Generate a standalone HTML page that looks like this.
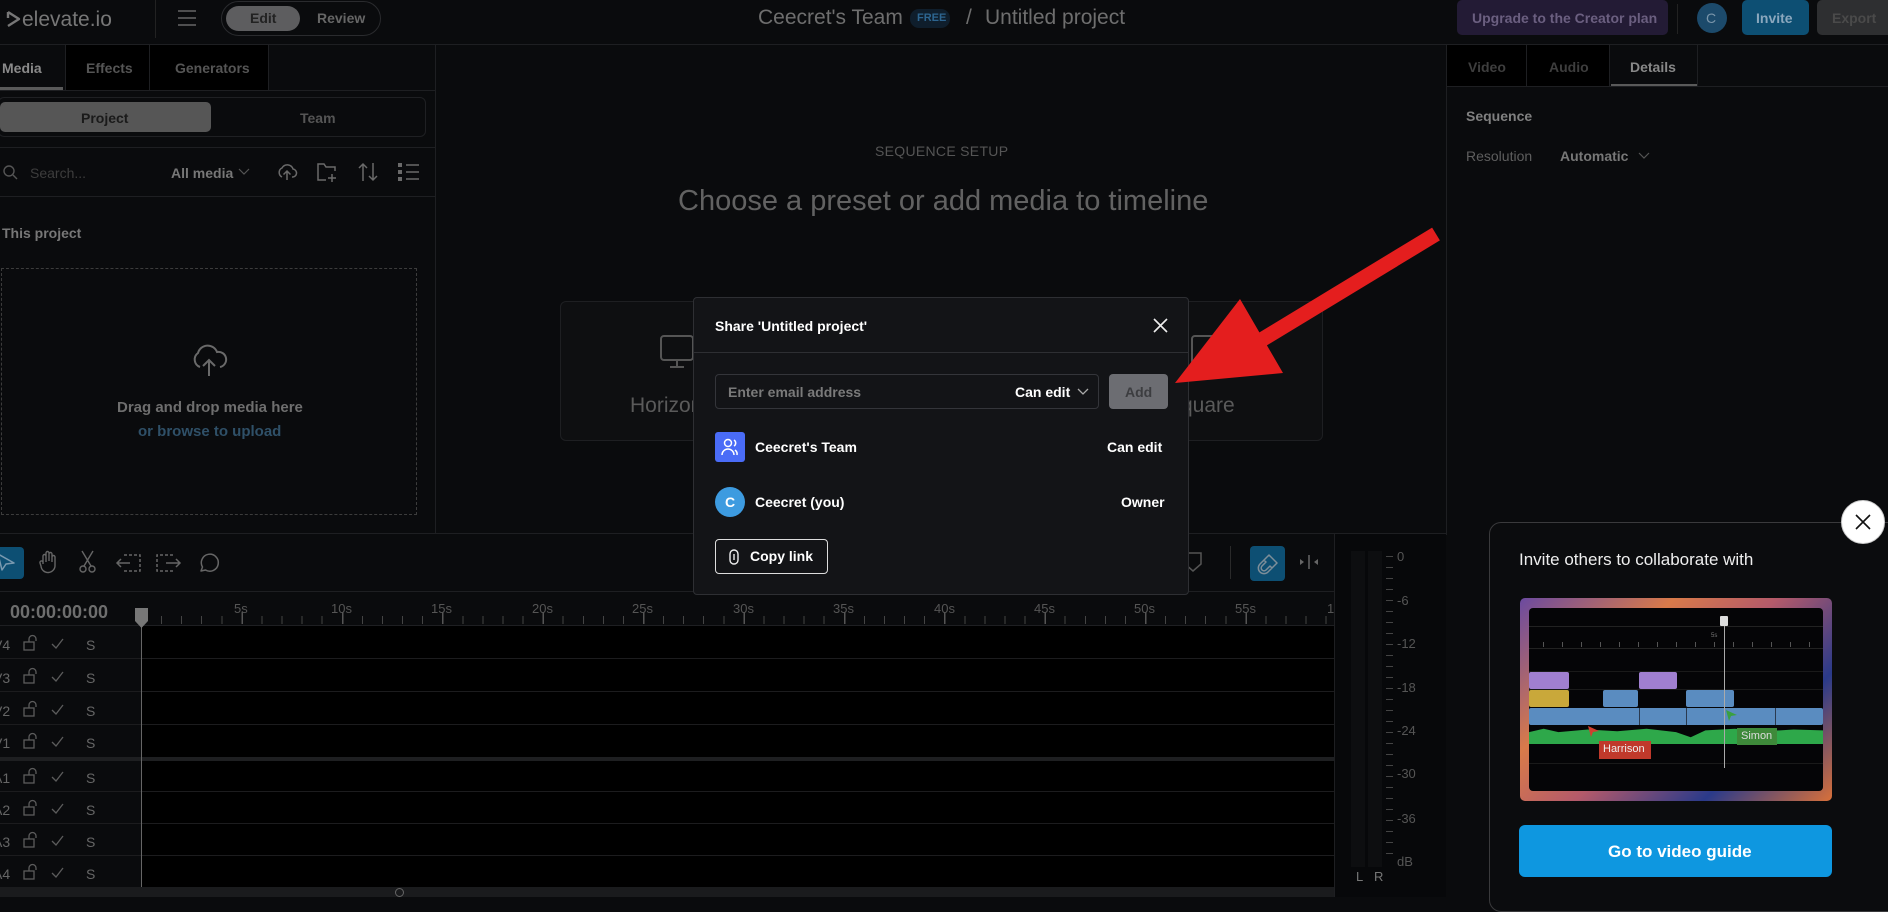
<!DOCTYPE html>
<html><head><meta charset="utf-8"><style>
*{margin:0;padding:0;box-sizing:border-box}
body{width:1888px;height:897px;overflow:hidden;background:#0a0b0d;font-family:"Liberation Sans",sans-serif;position:relative;color:#777}
.a{position:absolute}
.t{position:absolute;white-space:nowrap}
.b{font-weight:bold}
svg{position:absolute;overflow:visible}
</style></head><body>

<!-- HEADER -->
<div class="a" style="left:0;top:0;width:1888px;height:45px;background:#0a0b0d;border-bottom:1px solid #1e1f22"></div>
<svg style="left:6px;top:10px" width="16" height="18" viewBox="0 0 16 18"><path d="M2 2 L13 9 L2 16 M2 2 L2 8" fill="none" stroke="#777" stroke-width="2.4" stroke-linejoin="round"/></svg>
<div class="t" style="left:22px;top:8px;font-size:21px;color:#777">elevate.io</div>
<div class="a" style="left:155px;top:0;width:1px;height:38px;background:#222"></div>
<svg style="left:177px;top:10px" width="20" height="16"><path d="M1 1H19M1 8H19M1 15H19" stroke="#666" stroke-width="1.5"/></svg>
<div class="a" style="left:221px;top:1px;width:160px;height:35px;border:1px solid #2a2b2e;border-radius:18px"></div>
<div class="a" style="left:226px;top:6px;width:74px;height:25px;background:#5d5d5f;border-radius:13px"></div>
<div class="t b" style="left:250px;top:10px;font-size:14px;color:#222">Edit</div>
<div class="t b" style="left:317px;top:10px;font-size:14px;color:#666">Review</div>
<div class="t" style="left:758px;top:6px;font-size:21px;color:#6e6e6e">Ceecret's Team</div>
<div class="a" style="left:910px;top:9px;width:40px;height:19px;background:#0f1e2c;border-radius:9px"></div>
<div class="t b" style="left:917px;top:12px;font-size:11px;color:#2d6590">FREE</div>
<div class="t" style="left:966px;top:6px;font-size:21px;color:#6e6e6e">/</div>
<div class="t" style="left:985px;top:6px;font-size:21px;color:#6e6e6e">Untitled project</div>
<div class="a" style="left:1457px;top:0;width:211px;height:35px;background:#231b35;border-radius:5px"></div>
<div class="t b" style="left:1472px;top:10px;font-size:14px;color:#6b5f80">Upgrade to the Creator plan</div>
<div class="a" style="left:1677px;top:4px;width:1px;height:30px;background:#222"></div>
<div class="a" style="left:1697px;top:3px;width:30px;height:30px;background:#1c4a6b;border-radius:50%"></div>
<div class="t" style="left:1706px;top:10px;font-size:14px;color:#7a95aa">C</div>
<div class="a" style="left:1742px;top:0;width:67px;height:35px;background:#0d4f73;border-radius:5px"></div>
<div class="t b" style="left:1756px;top:10px;font-size:14px;color:#8aa7bd">Invite</div>
<div class="a" style="left:1817px;top:0;width:71px;height:35px;background:#2e2f31;border-radius:5px 0 0 5px"></div>
<div class="t b" style="left:1832px;top:10px;font-size:14px;color:#4a4a4a">Export</div>

<!-- LEFT PANEL -->
<div class="a" style="left:435px;top:45px;width:1px;height:488px;background:#1e1f22"></div>
<div class="a" style="left:65px;top:45px;width:85px;height:45px;background:#000;border-right:1px solid #1e1f22;border-left:1px solid #1e1f22"></div>
<div class="a" style="left:150px;top:45px;width:119px;height:45px;background:#000;border-right:1px solid #1e1f22"></div>
<div class="a" style="left:0;top:90px;width:436px;height:1px;background:#1e1f22"></div>
<div class="a" style="left:0;top:87px;width:63px;height:3px;background:#5a5a5a"></div>
<div class="t b" style="left:2px;top:60px;font-size:14px;color:#8a8a8a">Media</div>
<div class="t b" style="left:86px;top:60px;font-size:14px;color:#555">Effects</div>
<div class="t b" style="left:175px;top:60px;font-size:14px;color:#555">Generators</div>
<div class="a" style="left:-2px;top:97px;width:428px;height:40px;border:1px solid #1f2023;border-radius:6px"></div>
<div class="a" style="left:0;top:102px;width:211px;height:30px;background:#565656;border-radius:5px"></div>
<div class="t b" style="left:81px;top:110px;font-size:14px;color:#1a1a1a">Project</div>
<div class="t b" style="left:300px;top:110px;font-size:14px;color:#555">Team</div>
<div class="a" style="left:0;top:147px;width:436px;height:1px;background:#1e1f22"></div>
<svg style="left:3px;top:165px" width="16" height="16"><circle cx="6" cy="6" r="5" fill="none" stroke="#555" stroke-width="1.4"/><path d="M10 10L14 14" stroke="#555" stroke-width="1.4"/></svg>
<div class="t" style="left:30px;top:165px;font-size:14px;color:#3d3d3d">Search...</div>
<div class="t b" style="left:171px;top:165px;font-size:14px;color:#777">All media</div>
<svg style="left:238px;top:168px" width="12" height="8"><path d="M1 1L6 6L11 1" fill="none" stroke="#555" stroke-width="1.2"/></svg>
<svg style="left:275px;top:160px" width="24" height="24" viewBox="0 0 24 24"><path d="M7 17A5 5 0 0 1 7 8A6 6 0 0 1 18 9A4 4 0 0 1 17 17M12 20V11M8.5 14.5L12 11L15.5 14.5" fill="none" stroke="#6a6a6a" stroke-width="1.5"/></svg>
<svg style="left:316px;top:160px" width="22" height="24" viewBox="0 0 22 24"><path d="M10 20H2V4H8L10 7H19V11M16 14V22M12 18H20" fill="none" stroke="#6a6a6a" stroke-width="1.5"/></svg>
<svg style="left:357px;top:160px" width="22" height="24" viewBox="0 0 22 24"><path d="M6 21V4M2 8L6 4L10 8M16 3V20M12 16L16 20L20 16" fill="none" stroke="#6a6a6a" stroke-width="1.5"/></svg>
<svg style="left:397px;top:162px" width="24" height="20" viewBox="0 0 24 20"><path d="M9 3H22M9 10H22M9 17H22" stroke="#6a6a6a" stroke-width="1.6"/><rect x="1" y="1" width="4" height="4" fill="#6a6a6a"/><rect x="1" y="8" width="4" height="4" fill="#6a6a6a"/><rect x="1" y="15" width="4" height="4" fill="#6a6a6a"/></svg>
<div class="a" style="left:0;top:196px;width:436px;height:1px;background:#1e1f22"></div>
<div class="t b" style="left:2px;top:225px;font-size:14px;color:#777">This project</div>
<div class="a" style="left:1px;top:268px;width:416px;height:247px;border:1px dashed #3c3c3c"></div>
<svg style="left:190px;top:344px" width="38" height="34" viewBox="0 0 38 34"><path d="M10 23A8 8 0 0 1 8 9A10 10 0 0 1 27 8A7 7 0 0 1 30 23M19 32V17M13 22L19 16L25 22" fill="none" stroke="#6a6a6a" stroke-width="2"/></svg>
<div class="t b" style="left:117px;top:399px;font-size:15px;color:#6e6e6e">Drag and drop media here</div>
<div class="t b" style="left:138px;top:423px;font-size:15px;color:#2f5068">or browse to upload</div>

<!-- CENTER -->
<div class="t" style="left:875px;top:143px;font-size:14px;color:#555;letter-spacing:.3px">SEQUENCE SETUP</div>
<div class="t" style="left:678px;top:185px;font-size:29px;color:#626262">Choose a preset or add media to timeline</div>
<div class="a" style="left:560px;top:301px;width:240px;height:140px;background:#0e0f11;border:1px solid #1e1f22;border-radius:6px"></div>
<div class="a" style="left:1083px;top:301px;width:240px;height:140px;background:#0e0f11;border:1px solid #1e1f22;border-radius:6px"></div>
<svg style="left:660px;top:335px" width="34" height="34"><rect x="1" y="1" width="32" height="24" rx="3" fill="none" stroke="#555" stroke-width="2"/><path d="M17 25V32M10 32H24" stroke="#555" stroke-width="2"/></svg>
<div class="t" style="left:630px;top:394px;font-size:21px;color:#5a5a5a">Horizontal</div>
<svg style="left:1191px;top:335px" width="30" height="30"><rect x="1" y="1" width="28" height="28" rx="3" fill="none" stroke="#555" stroke-width="2"/></svg>
<div class="t" style="left:1167px;top:394px;font-size:21px;color:#5a5a5a">Square</div>

<!-- RIGHT PANEL -->
<div class="a" style="left:1446px;top:45px;width:1px;height:490px;background:#1e1f22"></div>
<div class="a" style="left:1447px;top:45px;width:80px;height:41px;background:#000;border-right:1px solid #1e1f22"></div>
<div class="a" style="left:1527px;top:45px;width:83px;height:41px;background:#000;border-right:1px solid #1e1f22"></div>
<div class="a" style="left:1610px;top:45px;width:88px;height:41px;border-right:1px solid #1e1f22"></div>
<div class="a" style="left:1447px;top:86px;width:441px;height:1px;background:#1e1f22"></div>
<div class="a" style="left:1611px;top:84px;width:86px;height:2px;background:#5a5a5a"></div>
<div class="t b" style="left:1468px;top:59px;font-size:14px;color:#3e3e3e">Video</div>
<div class="t b" style="left:1549px;top:59px;font-size:14px;color:#3e3e3e">Audio</div>
<div class="t b" style="left:1630px;top:59px;font-size:14px;color:#888">Details</div>
<div class="t b" style="left:1466px;top:108px;font-size:14px;color:#808080">Sequence</div>
<div class="t" style="left:1466px;top:148px;font-size:14px;color:#5e5e5e">Resolution</div>
<div class="t b" style="left:1560px;top:148px;font-size:14px;color:#777">Automatic</div>
<svg style="left:1638px;top:152px" width="12" height="8"><path d="M1 1L6 6L11 1" fill="none" stroke="#555" stroke-width="1.2"/></svg>

<!-- TIMELINE -->
<div class="a" style="left:0;top:533px;width:1446px;height:1px;background:#1e1f22"></div>
<div class="a" style="left:0;top:591px;width:1334px;height:1px;background:#1e1f22"></div>
<div class="a" style="left:0;top:547px;width:24px;height:32px;background:#0d4f73;border-radius:0 4px 4px 0"></div>
<svg style="left:0;top:553px" width="16" height="18"><path d="M-2 1L14 10L6 11L2 17Z" fill="none" stroke="#7a9ab0" stroke-width="1.5" stroke-linejoin="round"/></svg>
<svg style="left:38px;top:550px" width="22" height="24" viewBox="0 0 22 24"><path d="M5 14V6A1.5 1.5 0 0 1 8 6V12M8 11V3A1.5 1.5 0 0 1 11 3V11M11 11V4A1.5 1.5 0 0 1 14 4V12M14 12V7A1.5 1.5 0 0 1 17 7V15A7 7 0 0 1 3 16L2 13A1.5 1.5 0 0 1 5 12" fill="none" stroke="#666" stroke-width="1.4"/></svg>
<svg style="left:78px;top:550px" width="20" height="24" viewBox="0 0 20 24"><circle cx="5" cy="19" r="3" fill="none" stroke="#666" stroke-width="1.4"/><circle cx="14" cy="19" r="3" fill="none" stroke="#666" stroke-width="1.4"/><path d="M6 16L15 1M13 16L4 1" stroke="#666" stroke-width="1.4"/></svg>
<svg style="left:116px;top:553px" width="26" height="20" viewBox="0 0 26 20"><path d="M8 2H24V18H8" fill="none" stroke="#666" stroke-width="1.5" stroke-dasharray="3 2"/><path d="M1 10H14M5 6L1 10L5 14" fill="none" stroke="#666" stroke-width="1.5"/></svg>
<svg style="left:155px;top:553px" width="26" height="20" viewBox="0 0 26 20"><path d="M18 2H2V18H18" fill="none" stroke="#666" stroke-width="1.5" stroke-dasharray="3 2"/><path d="M11 10H25M21 6L25 10L21 14" fill="none" stroke="#666" stroke-width="1.5"/></svg>
<svg style="left:197px;top:551px" width="24" height="24" viewBox="0 0 24 24"><path d="M4 20L5.5 16A8.5 8.5 0 1 1 8.5 19Z" fill="none" stroke="#666" stroke-width="1.5" stroke-linejoin="round"/></svg>
<svg style="left:1184px;top:552px" width="18" height="20"><path d="M1 1H17V12L9 19L1 12Z" fill="none" stroke="#555" stroke-width="1.5"/></svg>
<div class="a" style="left:1230px;top:546px;width:1px;height:33px;background:#2a2a2a"></div>
<div class="a" style="left:1250px;top:546px;width:35px;height:35px;background:#0d4f73;border-radius:4px"></div>
<svg style="left:1256px;top:552px" width="24" height="24" viewBox="0 0 24 24"><path d="M8 8L4 12A5 5 0 0 0 12 20L16 16M11 5L8 8M16 16L19 13M11 5L13 3L21 11L19 13M8 8L10 10L6 14A2 2 0 0 0 10 18L14 14L16 16" fill="none" stroke="#7d8e99" stroke-width="1.5" stroke-linejoin="round"/></svg>
<svg style="left:1299px;top:554px" width="20" height="16"><path d="M10 1V15" stroke="#666" stroke-width="1.5"/><path d="M1 5L5 8L1 11ZM19 5L15 8L19 11Z" fill="#666"/></svg>

<div class="t b" style="left:10px;top:602px;font-size:18px;color:#6e6e6e">00:00:00:00</div>
<div class="a" style="left:141px;top:616px;width:1193px;height:8px;background:repeating-linear-gradient(90deg,#444 0 1px,transparent 1px 20.08px)"></div>
<div class="a" style="left:141px;top:612px;width:1193px;height:12px;background:repeating-linear-gradient(90deg,#555 0 1.5px,transparent 1.5px 100.4px)"></div>
<div class="a" style="left:0;top:625px;width:1334px;height:1px;background:#1e1f22"></div>
<div class="t" style="left:234px;top:601px;font-size:13px;color:#555">5s</div>
<div class="t" style="left:331px;top:601px;font-size:13px;color:#555">10s</div>
<div class="t" style="left:431px;top:601px;font-size:13px;color:#555">15s</div>
<div class="t" style="left:532px;top:601px;font-size:13px;color:#555">20s</div>
<div class="t" style="left:632px;top:601px;font-size:13px;color:#555">25s</div>
<div class="t" style="left:733px;top:601px;font-size:13px;color:#555">30s</div>
<div class="t" style="left:833px;top:601px;font-size:13px;color:#555">35s</div>
<div class="t" style="left:934px;top:601px;font-size:13px;color:#555">40s</div>
<div class="t" style="left:1034px;top:601px;font-size:13px;color:#555">45s</div>
<div class="t" style="left:1134px;top:601px;font-size:13px;color:#555">50s</div>
<div class="t" style="left:1235px;top:601px;font-size:13px;color:#555">55s</div>
<div class="a" style="left:1327px;top:601px;width:7px;height:16px;overflow:hidden"><div class="t" style="left:0;top:0;font-size:13px;color:#555">1m</div></div>

<!-- tracks -->
<div class="a" style="left:141px;top:626px;width:1193px;height:261px;background:#000"></div>
<div class="a" style="left:0;top:658px;width:1334px;height:1px;background:#1c1c1e"></div>
<div class="a" style="left:0;top:691px;width:1334px;height:1px;background:#1c1c1e"></div>
<div class="a" style="left:0;top:724px;width:1334px;height:1px;background:#1c1c1e"></div>
<div class="a" style="left:0;top:757px;width:1334px;height:4px;background:#1e1f21"></div>
<div class="a" style="left:0;top:791px;width:1334px;height:1px;background:#1c1c1e"></div>
<div class="a" style="left:0;top:823px;width:1334px;height:1px;background:#1c1c1e"></div>
<div class="a" style="left:0;top:855px;width:1334px;height:1px;background:#1c1c1e"></div>
<div class="a" style="left:0;top:887px;width:1334px;height:10px;background:#1a1b1d"></div>
<div class="a" style="left:395px;top:888px;width:9px;height:9px;border:1.5px solid #666;border-radius:50%"></div>
<div class="a" style="left:141px;top:612px;width:1px;height:275px;background:#666"></div>
<svg style="left:134px;top:607px" width="15" height="22"><path d="M1 1H14V14L7.5 21L1 14Z" fill="#777"/></svg>

<!-- track headers -->
<div id="th"></div>
<div class="t" style="left:-7px;top:637px;font-size:14px;color:#666">V4</div>
<div class="t" style="left:-7px;top:670px;font-size:14px;color:#666">V3</div>
<div class="t" style="left:-7px;top:703px;font-size:14px;color:#666">V2</div>
<div class="t" style="left:-7px;top:735px;font-size:14px;color:#666">V1</div>
<div class="t" style="left:-7px;top:770px;font-size:14px;color:#666">A1</div>
<div class="t" style="left:-7px;top:802px;font-size:14px;color:#666">A2</div>
<div class="t" style="left:-7px;top:834px;font-size:14px;color:#666">A3</div>
<div class="t" style="left:-7px;top:866px;font-size:14px;color:#666">A4</div>
<svg style="left:24px;top:636px" width="80" height="240">
<g fill="none" stroke="#5c5c5c" stroke-width="1.3">
<g id="r"><rect x="0" y="6" width="10" height="8"/><path d="M5 6V3A3.5 3.5 0 0 1 12 3V5"/><path d="M28 8L32 12L39 3"/></g>
<use href="#r" y="33"/><use href="#r" y="66"/><use href="#r" y="98"/><use href="#r" y="133"/><use href="#r" y="165"/><use href="#r" y="197"/><use href="#r" y="229"/>
</g></svg>
<div class="t" style="left:86px;top:637px;font-size:14px;color:#666">S</div>
<div class="t" style="left:86px;top:670px;font-size:14px;color:#666">S</div>
<div class="t" style="left:86px;top:703px;font-size:14px;color:#666">S</div>
<div class="t" style="left:86px;top:735px;font-size:14px;color:#666">S</div>
<div class="t" style="left:86px;top:770px;font-size:14px;color:#666">S</div>
<div class="t" style="left:86px;top:802px;font-size:14px;color:#666">S</div>
<div class="t" style="left:86px;top:834px;font-size:14px;color:#666">S</div>
<div class="t" style="left:86px;top:866px;font-size:14px;color:#666">S</div>

<!-- meter -->
<div class="a" style="left:1334px;top:534px;width:112px;height:363px;background:#07080a;border-left:1px solid #1e1f22"></div>
<div class="a" style="left:1351px;top:551px;width:14px;height:316px;background:#0d0e10"></div>
<div class="a" style="left:1368px;top:551px;width:14px;height:316px;background:#0d0e10"></div>
<div class="a" style="left:1386px;top:556px;width:7px;height:308px;background:repeating-linear-gradient(180deg,#444 0 1px,transparent 1px 11px)"></div>
<div class="t" style="left:1397px;top:549px;font-size:13px;color:#555">0</div>
<div class="t" style="left:1397px;top:593px;font-size:13px;color:#555">-6</div>
<div class="t" style="left:1397px;top:636px;font-size:13px;color:#555">-12</div>
<div class="t" style="left:1397px;top:680px;font-size:13px;color:#555">-18</div>
<div class="t" style="left:1397px;top:723px;font-size:13px;color:#555">-24</div>
<div class="t" style="left:1397px;top:766px;font-size:13px;color:#555">-30</div>
<div class="t" style="left:1397px;top:811px;font-size:13px;color:#555">-36</div>
<div class="t" style="left:1397px;top:854px;font-size:13px;color:#555">dB</div>
<div class="t" style="left:1356px;top:869px;font-size:13px;color:#777">L</div>
<div class="t" style="left:1374px;top:869px;font-size:13px;color:#777">R</div>

<!-- POPUP bottom right -->
<div class="a" style="left:1489px;top:522px;width:420px;height:390px;background:#0b0c0e;border:1px solid #3a3a3c;border-radius:12px"></div>
<div class="t" style="left:1519px;top:550px;font-size:17px;color:#eee">Invite others to collaborate with</div>
<div class="a" style="left:1520px;top:598px;width:312px;height:203px;border-radius:5px;overflow:hidden;background:linear-gradient(135deg,#6b4aa0 0%,#d87a4a 30%,#b45a6a 50%,#2a3a8a 75%,#d8703a 100%)">
 <div class="a" style="left:9px;top:10px;width:294px;height:183px;background:#050507;border-radius:4px;overflow:hidden">
  <div class="a" style="left:0;top:18px;width:294px;height:1px;background:#222"></div>
  <div class="a" style="left:0;top:40px;width:294px;height:1px;background:#222"></div>
  <div class="a" style="left:0;top:63px;width:294px;height:1px;background:#1a1a1a"></div>
  <div class="a" style="left:0;top:81px;width:294px;height:1px;background:#1a1a1a"></div>
  <div class="a" style="left:0;top:155px;width:294px;height:1px;background:#1a1a1a"></div>
  <div class="a" style="left:14px;top:34px;width:270px;height:5px;background:repeating-linear-gradient(90deg,#555 0 1px,transparent 1px 19px)"></div>
  <div class="t" style="left:182px;top:25px;font-size:6px;color:#777">5s</div>
  <div class="a" style="left:0;top:64px;width:40px;height:17px;background:#a07fd0;border-radius:2px"></div>
  <div class="a" style="left:110px;top:64px;width:38px;height:17px;background:#a07fd0;border-radius:2px"></div>
  <div class="a" style="left:0;top:82px;width:40px;height:17px;background:#c9a83a;border-radius:2px"></div>
  <div class="a" style="left:74px;top:82px;width:35px;height:17px;background:#5a8cc0;border-radius:2px"></div>
  <div class="a" style="left:157px;top:82px;width:48px;height:17px;background:#5a8cc0;border-radius:2px"></div>
  <div class="a" style="left:0;top:100px;width:294px;height:17px;background:#5a8cc0;border-radius:2px"></div>
  <div class="a" style="left:110px;top:100px;width:1px;height:17px;background:#2a3a50"></div>
  <div class="a" style="left:157px;top:100px;width:1px;height:17px;background:#2a3a50"></div>
  <div class="a" style="left:246px;top:100px;width:1px;height:17px;background:#2a3a50"></div>
  <div class="a" style="left:0;top:119px;width:294px;height:17px;background:#2ea84a;clip-path:polygon(0 30%,5% 10%,10% 30%,20% 15%,30% 25%,40% 10%,50% 30%,55% 60%,60% 20%,70% 10%,80% 25%,90% 15%,100% 20%,100% 100%,0 100%)"></div>
  <div class="a" style="left:195px;top:10px;width:1px;height:150px;background:#aaa"></div>
  <div class="a" style="left:191px;top:8px;width:8px;height:10px;background:#ddd;border-radius:1px"></div>
  <div class="a" style="left:70px;top:133px;width:52px;height:18px;background:#c0392b"></div>
  <div class="t" style="left:74px;top:135px;font-size:11px;color:#eee">Harrison</div>
  <div class="a" style="left:208px;top:120px;width:40px;height:17px;background:#3e8a3a"></div>
  <div class="t" style="left:212px;top:122px;font-size:11px;color:#ddd">Simon</div>
  <svg style="left:59px;top:118px" width="12" height="12"><path d="M0 0L11 5L5 6L3 11Z" fill="#d04030"/></svg>
  <svg style="left:197px;top:102px" width="12" height="12"><path d="M0 0L11 5L5 6L3 11Z" fill="#3aa040"/></svg>
 </div>
</div>
<div class="a" style="left:1519px;top:825px;width:313px;height:52px;background:#0e97e0;border-radius:6px"></div>
<div class="t b" style="left:1608px;top:842px;font-size:17px;color:#fff">Go to video guide</div>
<div class="a" style="left:1841px;top:500px;width:44px;height:44px;background:#fff;border-radius:50%;border:1px solid #ccc"></div>
<svg style="left:1855px;top:514px" width="16" height="16"><path d="M1 1L15 15M15 1L1 15" stroke="#111" stroke-width="1.6"/></svg>

<!-- MODAL -->
<div class="a" style="left:693px;top:297px;width:496px;height:298px;background:#131417;border:1px solid #2e2f33;border-radius:4px"></div>
<div class="t b" style="left:715px;top:318px;font-size:14px;color:#fff">Share 'Untitled project'</div>
<svg style="left:1153px;top:318px" width="15" height="15"><path d="M1 1L14 14M14 1L1 14" stroke="#eee" stroke-width="1.6"/></svg>
<div class="a" style="left:694px;top:352px;width:494px;height:1px;background:#2e2f33"></div>
<div class="a" style="left:715px;top:374px;width:384px;height:35px;border:1px solid #34353a;border-radius:4px"></div>
<div class="t b" style="left:728px;top:384px;font-size:14px;color:#7a7a7a">Enter email address</div>
<div class="t b" style="left:1015px;top:384px;font-size:14px;color:#fff">Can edit</div>
<svg style="left:1077px;top:388px" width="12" height="8"><path d="M1 1L6 6L11 1" fill="none" stroke="#aaa" stroke-width="1.3"/></svg>
<div class="a" style="left:1109px;top:374px;width:59px;height:35px;background:#6c6d72;border-radius:4px"></div>
<div class="t b" style="left:1125px;top:384px;font-size:14px;color:#3c3d40">Add</div>
<div class="a" style="left:715px;top:432px;width:30px;height:30px;background:#4a6cf7;border-radius:3px"></div>
<svg style="left:719px;top:436px" width="22" height="22" viewBox="0 0 22 22"><circle cx="9" cy="7" r="3.5" fill="none" stroke="#fff" stroke-width="1.5"/><path d="M3 19A6 6 0 0 1 15 19M15 4A3.5 3.5 0 0 1 15 10M18 19A5 5 0 0 0 16 14" fill="none" stroke="#fff" stroke-width="1.5"/></svg>
<div class="t b" style="left:755px;top:439px;font-size:14px;color:#fff">Ceecret's Team</div>
<div class="t b" style="left:1107px;top:439px;font-size:14px;color:#fff">Can edit</div>
<div class="a" style="left:715px;top:487px;width:30px;height:30px;background:#3d9be0;border-radius:50%"></div>
<div class="t b" style="left:725px;top:494px;font-size:14px;color:#fff">C</div>
<div class="t b" style="left:755px;top:494px;font-size:14px;color:#fff">Ceecret (you)</div>
<div class="t b" style="left:1121px;top:494px;font-size:14px;color:#fff">Owner</div>
<div class="a" style="left:715px;top:539px;width:113px;height:35px;border:1.5px solid #ddd;border-radius:4px"></div>
<svg style="left:729px;top:549px" width="10" height="16"><rect x="1" y="1" width="8" height="14" rx="4" fill="none" stroke="#eee" stroke-width="1.4"/><path d="M5 5V11" stroke="#eee" stroke-width="1.4"/></svg>
<div class="t b" style="left:750px;top:548px;font-size:14px;color:#fff">Copy link</div>

<!-- RED ARROW -->
<svg style="left:0;top:0" width="1888" height="897">
<path d="M1436 234L1258 342" stroke="#e41e1e" stroke-width="15"/>
<path d="M1240 299L1175 383L1283 373Z" fill="#e41e1e"/>
</svg>
</body></html>
